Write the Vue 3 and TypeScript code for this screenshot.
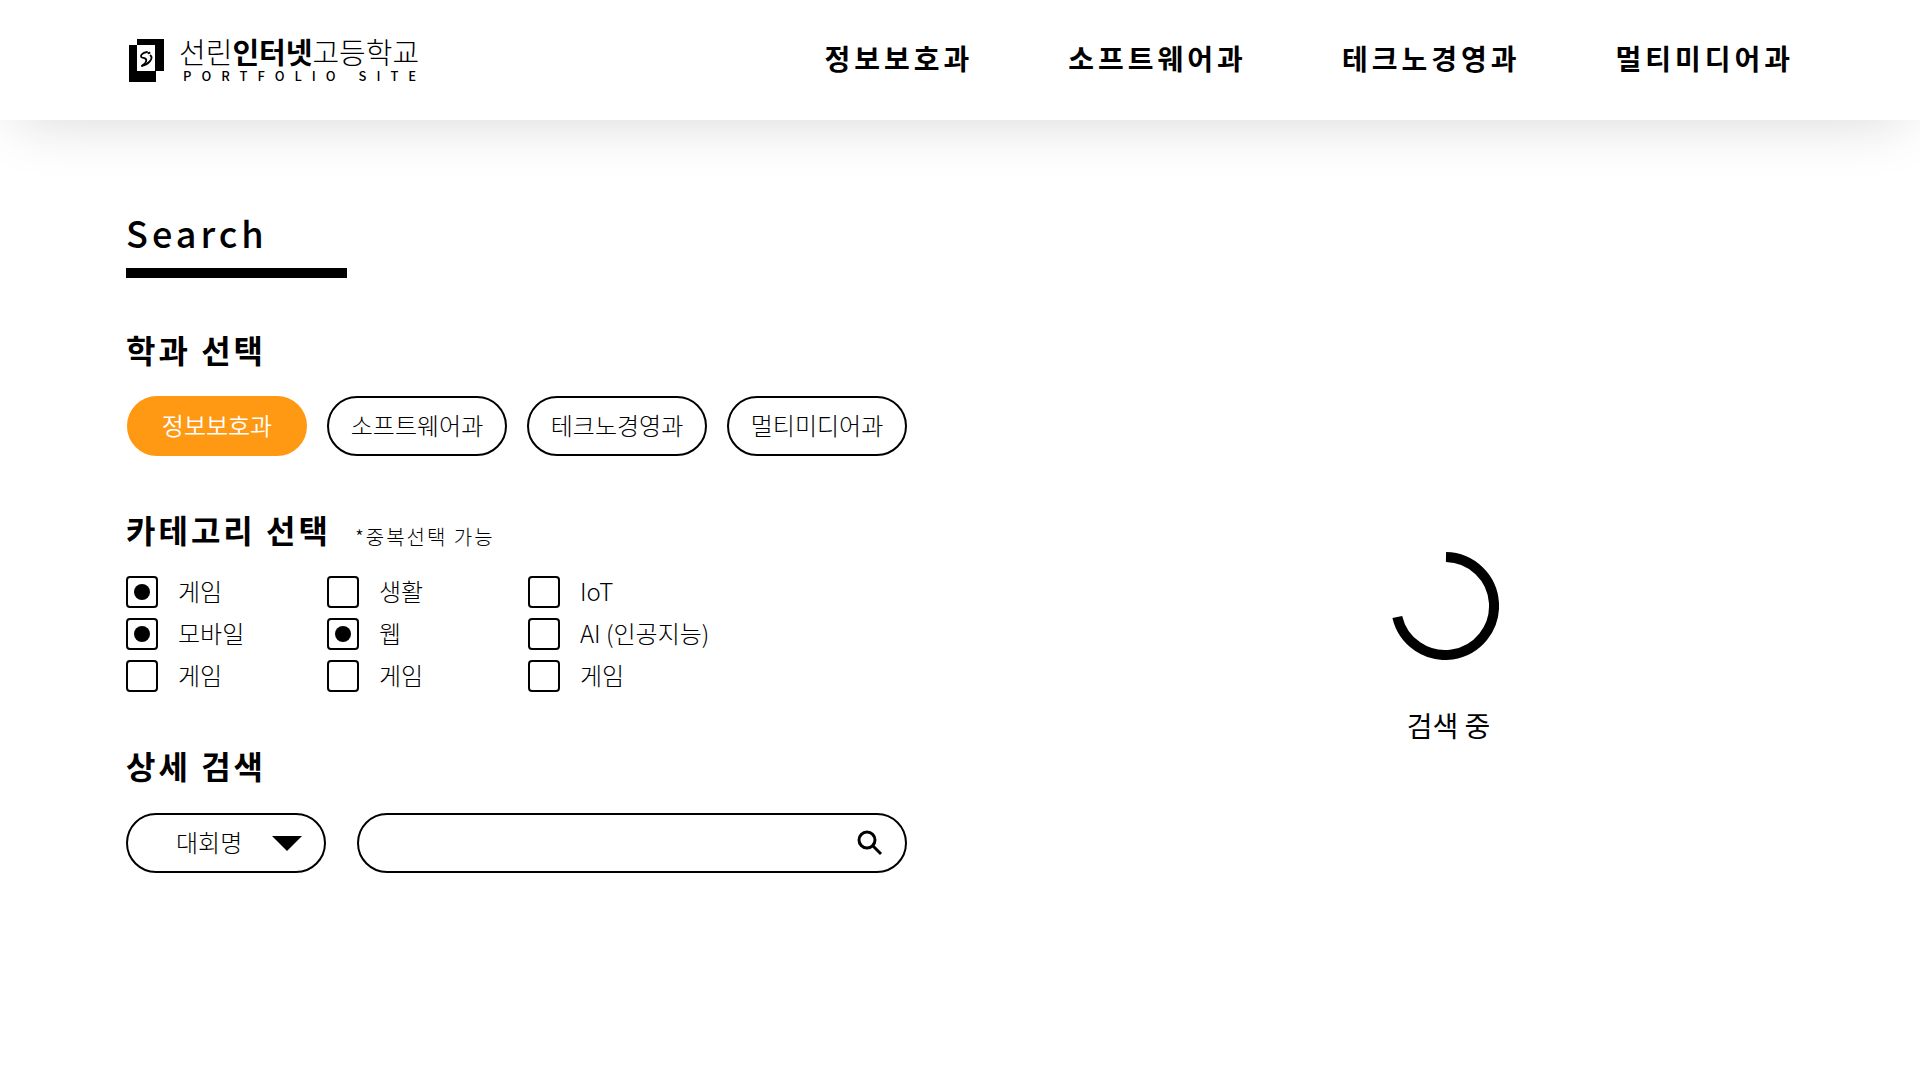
<script setup lang="ts">
import { ref } from 'vue'

interface Category {
  id: string
  name: string
}

const departments: string[] = ['정보보호과', '소프트웨어과', '테크노경영과', '멀티미디어과']

const categories: Category[] = [
  { id: 'game', name: '게임' },
  { id: 'life', name: '생활' },
  { id: 'iot', name: 'IoT' },
  { id: 'mobile', name: '모바일' },
  { id: 'web', name: '웹' },
  { id: 'ai', name: 'AI (인공지능)' },
  { id: 'game-2', name: '게임' },
  { id: 'game-3', name: '게임' },
  { id: 'game-4', name: '게임' },
]

const department = ref<string>(departments[0])
const checked = ref<string[]>(['game', 'mobile', 'web'])
const field = ref<string>('대회명')
const keyword = ref<string>('')
</script>

<template>
  <header class="header">
    <a class="logo" href="#">
      <svg class="logo-mark" width="35" height="43" viewBox="0 0 35 43" aria-hidden="true">
        <path d="M8 0H35V32H27V43H0V6H8Z" fill="#000" />
        <path d="M8 6H26V32H8Z" fill="#fff" />
        <g fill="none" stroke="#000" stroke-linecap="round">
          <path d="M18 13C13 13.500 10.500 17.500 13 18.500C15 19.300 17.500 19 17.300 21.500C17.100 23.500 15.500 25 13 26.800" stroke-width="1.800" />
          <path d="M21.500 16.500C24.500 19 20 25.500 13 26.800" stroke-width="1.800" />
          <path d="M19.500 14.200L20.500 13.800" stroke-width="2" />
        </g>
      </svg>
      <span class="logo-text">
        <span class="logo-name">선린<strong>인터넷</strong>고등학교</span>
        <span class="logo-sub">PORTFOLIO SITE</span>
      </span>
    </a>
    <nav class="nav">
      <a v-for="name in departments" :key="name" href="#">{{ name }}</a>
    </nav>
  </header>

  <main class="main">
    <form class="search" @submit.prevent>
      <h1 class="title">Search</h1>

      <section class="section">
        <h2>학과 선택</h2>
        <div class="pills">
          <button
            v-for="name in departments"
            :key="name"
            type="button"
            class="pill"
            :class="{ active: name === department }"
            :aria-pressed="name === department"
            @click="department = name"
          >
            {{ name }}
          </button>
        </div>
      </section>

      <section class="section">
        <div class="heading">
          <h2>카테고리 선택</h2>
          <span class="note">*중복선택 가능</span>
        </div>
        <div class="categories">
          <label v-for="item in categories" :key="item.id" class="category">
            <input v-model="checked" type="checkbox" :value="item.id" />
            <span>{{ item.name }}</span>
          </label>
        </div>
      </section>

      <section class="section">
        <h2>상세 검색</h2>
        <div class="controls">
          <div class="select">
            <select v-model="field" aria-label="검색 기준">
              <option>대회명</option>
            </select>
            <svg class="arrow" width="30" height="15" viewBox="0 0 30 15" aria-hidden="true">
              <path d="M0 0H30L15 15Z" />
            </svg>
          </div>
          <div class="field">
            <input v-model="keyword" type="text" aria-label="검색어" />
            <button type="submit" aria-label="검색">
              <svg width="26" height="26" viewBox="0 0 26 26" fill="none" stroke="#000" aria-hidden="true">
                <circle cx="10" cy="10" r="8" stroke-width="3" />
                <path d="M16 16L24 24" stroke-width="3" />
              </svg>
            </button>
          </div>
        </div>
      </section>
    </form>

    <section class="result" aria-live="polite">
      <svg width="108" height="108" viewBox="0 0 108 108" fill="none" aria-hidden="true">
        <path d="M55 5A49 49 0 1 1 6.300 65" stroke="#000" stroke-width="10" />
      </svg>
      <p>검색 중</p>
    </section>
  </main>
</template>

<style>
body {
  margin: 0;
  background: #fff;
}
</style>

<style scoped>
.header,
.main {
  box-sizing: border-box;
  padding: 0 126px;
  color: #000;
  font-family: 'Noto Sans CJK KR', sans-serif;
}

.header {
  display: flex;
  align-items: center;
  justify-content: space-between;
  height: 120px;
  background: #fff;
  box-shadow: 0 15px 60px -15px rgba(0, 0, 0, 0.16);
}

.header a {
  color: #000;
  text-decoration: none;
}

.logo {
  display: flex;
  align-items: center;
  gap: 15px;
  padding-left: 3px;
}

.logo-text {
  display: flex;
  flex-direction: column;
  gap: 2px;
}

.logo-name {
  font-size: 29px;
  font-weight: 200;
  line-height: 30px;
}

.logo-name strong {
  font-weight: 700;
}

.logo-sub {
  padding-left: 4px;
  font-size: 13px;
  font-weight: 500;
  line-height: 16px;
  letter-spacing: 10px;
}

.nav {
  display: flex;
  gap: 95px;
  padding-bottom: 4px;
}

.nav a {
  font-size: 28px;
  font-weight: 700;
  line-height: 40px;
  letter-spacing: 4px;
}

.main {
  display: flex;
  gap: 188px;
  min-height: calc(100vh - 120px);
}

.search {
  flex: none;
  width: 781px;
  padding: 88px 0;
}

.title {
  width: 221px;
  margin: 0 0 51px;
  padding-bottom: 12px;
  border-bottom: 10px solid #000;
  font-size: 36px;
  font-weight: 500;
  line-height: 48px;
  letter-spacing: 4px;
}

.section + .section {
  margin-top: 53px;
}

h2 {
  margin: 0;
  font-size: 32px;
  font-weight: 700;
  line-height: 40px;
  letter-spacing: 3px;
}

.heading {
  display: flex;
  align-items: flex-end;
  gap: 24px;
}

.note {
  font-size: 20px;
  font-weight: 300;
  line-height: 24px;
  letter-spacing: 2px;
}

.pills,
.categories {
  margin-top: 27px;
}

.pills {
  display: grid;
  grid-template-columns: repeat(4, 1fr);
  gap: 20px;
  padding-left: 1px;
}

.pill {
  height: 60px;
  padding: 0 0 2px;
  border: 2px solid #000;
  border-radius: 30px;
  background: #fff;
  color: #000;
  font: 300 24px/32px 'Noto Sans CJK KR', sans-serif;
}

.pill.active {
  border-color: #ff9812;
  background: #ff9812;
  color: #fff;
  font-weight: 350;
}

.categories {
  display: grid;
  grid-template-columns: 201px 201px 1fr;
  gap: 10px 0;
}

.category {
  display: flex;
  align-items: center;
  gap: 20px;
  font-size: 24px;
  font-weight: 300;
  line-height: 28px;
}

.category span {
  padding-bottom: 2px;
}

.category input {
  flex: none;
  box-sizing: border-box;
  display: grid;
  place-items: center;
  width: 32px;
  height: 32px;
  margin: 0;
  border: 2px solid #000;
  border-radius: 4px;
  appearance: none;
}

.category input:checked::before {
  width: 16px;
  height: 16px;
  border-radius: 50%;
  background: #000;
  content: '';
}

.controls {
  display: flex;
  gap: 31px;
  margin-top: 28px;
}

.select {
  position: relative;
  width: 200px;
}

.select select {
  box-sizing: border-box;
  width: 100%;
  height: 60px;
  padding: 0 48px 2px;
  border: 2px solid #000;
  border-radius: 30px;
  background: #fff;
  color: #000;
  font: 300 24px/32px 'Noto Sans CJK KR', sans-serif;
  appearance: none;
}

.arrow {
  position: absolute;
  top: 23px;
  right: 24px;
  pointer-events: none;
}

.field {
  box-sizing: border-box;
  display: flex;
  flex: 1;
  align-items: center;
  height: 60px;
  padding: 0 22px 0 28px;
  border: 2px solid #000;
  border-radius: 30px;
}

.field input {
  flex: 1;
  min-width: 0;
  padding: 0;
  border: 0;
  outline: 0;
  background: none;
  font: 300 24px/32px 'Noto Sans CJK KR', sans-serif;
}

.field button {
  display: flex;
  padding: 0;
  border: 0;
  background: none;
}

.result {
  display: flex;
  flex: 1;
  flex-direction: column;
  align-items: center;
  justify-content: center;
  padding-top: 96px;
}

.result p {
  margin: 45px 0 0;
  padding-left: 8px;
  font-size: 28px;
  font-weight: 400;
  line-height: 40px;
}
</style>
